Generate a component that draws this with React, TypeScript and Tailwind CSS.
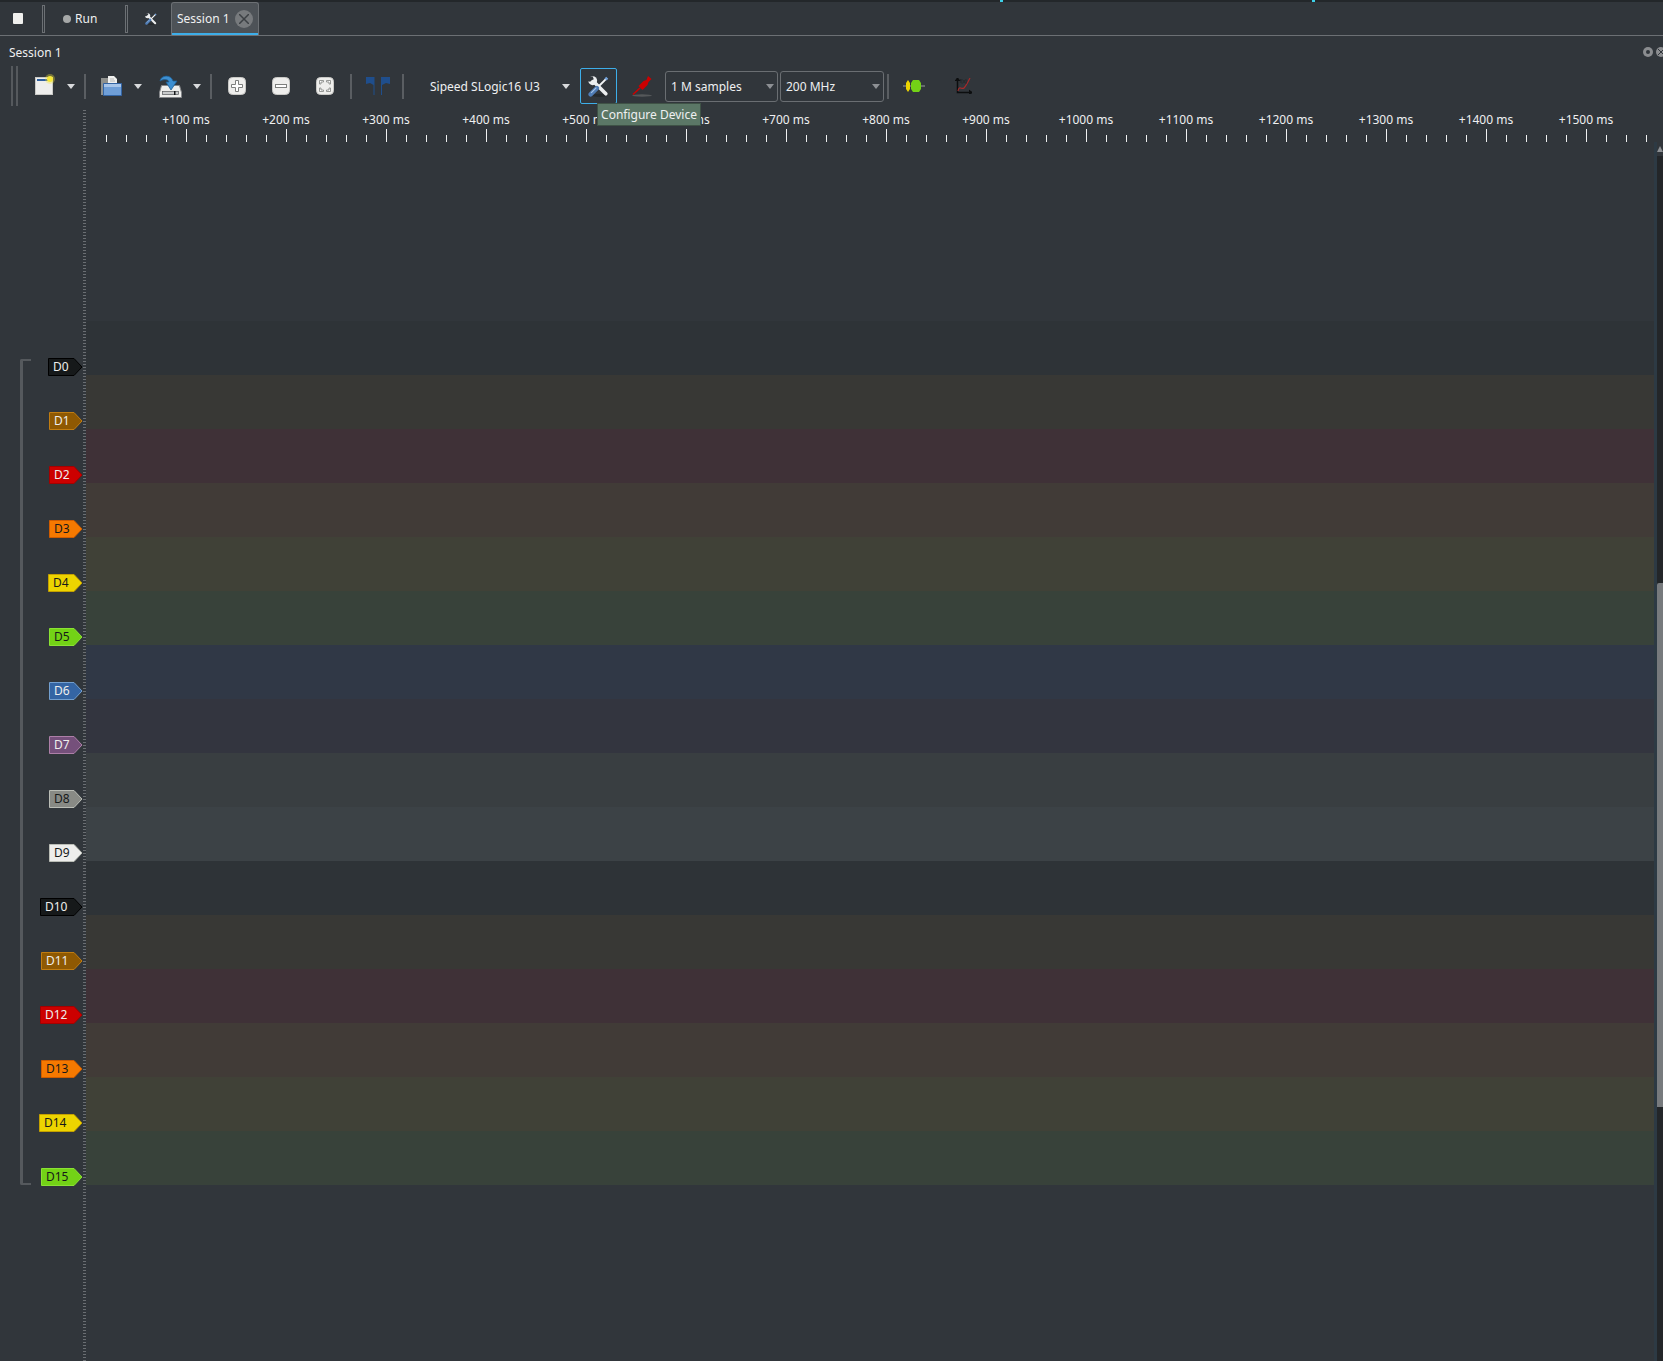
import React from "react";

const channels = [
  { n: "D0", w: 35, fill: "#16191a", line: "#000000", text: "#eeeeec", band: "bg-[#2e3337]" },
  { n: "D1", w: 34, fill: "#8f5902", line: "#c17d11", text: "#eeeeec", band: "bg-[#383835]" },
  { n: "D2", w: 34, fill: "#cc0000", line: "#a40000", text: "#eeeeec", band: "bg-[#3f3137]" },
  { n: "D3", w: 34, fill: "#f57900", line: "#ce5c00", text: "#16191a", band: "bg-[#413b37]" },
  { n: "D4", w: 35, fill: "#edd400", line: "#c4a000", text: "#16191a", band: "bg-[#404137]" },
  { n: "D5", w: 34, fill: "#73d216", line: "#8ae234", text: "#16191a", band: "bg-[#38423a]" },
  { n: "D6", w: 34, fill: "#3465a4", line: "#729fcf", text: "#eeeeec", band: "bg-[#303846]" },
  { n: "D7", w: 34, fill: "#75507b", line: "#ad7fa8", text: "#eeeeec", band: "bg-[#33353f]" },
  { n: "D8", w: 34, fill: "#888a85", line: "#babdb6", text: "#16191a", band: "bg-[#393e41]" },
  { n: "D9", w: 34, fill: "#eeeeec", line: "#babdb6", text: "#16191a", band: "bg-[#3c4246]" },
  { n: "D10", w: 43, fill: "#16191a", line: "#000000", text: "#eeeeec", band: "bg-[#2e3337]" },
  { n: "D11", w: 42, fill: "#8f5902", line: "#c17d11", text: "#eeeeec", band: "bg-[#383835]" },
  { n: "D12", w: 43, fill: "#cc0000", line: "#a40000", text: "#eeeeec", band: "bg-[#3f3137]" },
  { n: "D13", w: 42, fill: "#f57900", line: "#ce5c00", text: "#16191a", band: "bg-[#413b37]" },
  { n: "D14", w: 44, fill: "#edd400", line: "#c4a000", text: "#16191a", band: "bg-[#404137]" },
  { n: "D15", w: 42, fill: "#73d216", line: "#8ae234", text: "#16191a", band: "bg-[#38423a]" },
];

const labels = Array.from({ length: 15 }, (_, i) => `+${(i + 1) * 100} ms`);

function Sep() {
  return <div className="w-[2px] h-[25px] bg-[#5a5e62] shrink-0" />;
}

function Caret() {
  return (
    <svg width="8" height="5" viewBox="0 0 8 5" className="shrink-0">
      <path d="M0 0h8L4 5z" fill="#d8dadc" />
    </svg>
  );
}

function TabSep() {
  return <div className="w-[3px] h-[28px] border border-[#6c7074] bg-[#31363b] shrink-0" />;
}

function Tools({ size }: { size: number }) {
  return (
    <svg width={size} height={size} viewBox="0 0 20 20" className="shrink-0">
      <ellipse cx="11" cy="18.500" rx="7" ry="1.500" fill="#25292c" />
      <path d="M5 5l12 12" stroke="#eceeef" strokeWidth="3.400" strokeLinecap="round" />
      <circle cx="4.500" cy="4.500" r="4.200" fill="#eceeef" />
      <path d="M0 0.500h4.500l1 2.500-2 1-1.500 1.500L0 5z" fill="#31363b" />
      <path d="M10 10l8-8" stroke="#f2f4f5" strokeWidth="1.800" />
      <path d="M16.500 1.500l2 2" stroke="#6f9fd8" strokeWidth="2.200" />
      <path d="M2.500 17.500l6-6" stroke="#4f7cb5" strokeWidth="4.200" strokeLinecap="round" />
      <path d="M3 16l5-5" stroke="#a9c6e8" strokeWidth="1" />
    </svg>
  );
}

function ZoomBtn({ kind }: { kind: "in" | "out" | "fit" }) {
  return (
    <svg width="18" height="18" viewBox="0 0 18 18" className="shrink-0">
      <rect x="0.500" y="0.500" width="17" height="17" rx="4" fill="#eeeeec" stroke="#c9c9c6" />
      {kind === "in" && <path d="M7.500 3.500h3v4h4v3h-4v4h-3v-4h-4v-3h4z" fill="#fff" stroke="#7d7f7d" />}
      {kind === "out" && <rect x="3.500" y="7.500" width="11" height="3" fill="#fff" stroke="#7d7f7d" />}
      {kind === "fit" && (
        <path
          d="M3.500 7V3.500H7.500V5H5V7zM14.500 7V3.500H10.500V5H13V7zM14.500 11V14.500H10.500V13H13V11zM3.500 11V14.500H7.500V13H5V11z"
          fill="#fff"
          stroke="#8b8d8b"
          strokeWidth="0.900"
        />
      )}
    </svg>
  );
}

function Combo({ text, w }: { text: string; w: string }) {
  return (
    <div className={`${w} h-[31px] rounded-[3px] border border-[#6a6e72] flex items-center justify-between pl-[5px] pr-[3px] text-[#eff0f1]`}>
      <span className="mt-[1px]">{text}</span>
      <svg width="8" height="5" viewBox="0 0 8 5"><path d="M0 0h8L4 5z" fill="#8d9094" /></svg>
    </div>
  );
}

function Label({ ch }: { ch: (typeof channels)[number] }) {
  const w = ch.w;
  return (
    <div className="relative h-[20px] flex items-center" style={{ width: w }}>
      <svg width={w} height="20" viewBox={`0 0 ${w} 20`} className="absolute inset-0">
        <path d={`M0.500 1.500H${w - 9}L${w - 1} 10L${w - 9} 18.500H0.500z`} fill={ch.fill} stroke={ch.line} />
      </svg>
      <span className="relative pl-[5px] text-[12px] leading-none" style={{ color: ch.text }}>{ch.n}</span>
    </div>
  );
}

const dots =
  "bg-[repeating-linear-gradient(to_bottom,#6a6e72_0,#6a6e72_1px,transparent_1px,transparent_3px)] bg-[length:3px_100%] bg-no-repeat bg-[position:83px_0]";

export default function App() {
  return (
    <div className="w-[1663px] h-[1361px] overflow-hidden flex flex-col bg-[#31363b] text-[#eff0f1] font-['Noto_Sans','Open_Sans',sans-serif] text-[12px]">
      {/* Top strip */}
      <div className="h-[2px] bg-[#23272a] shrink-0 relative">
        <div className="absolute left-[1000px] top-0 w-[3px] h-[2px] bg-[#3dd0e9]" />
        <div className="absolute left-[1312px] top-0 w-[3px] h-[2px] bg-[#3dd0e9]" />
      </div>

      {/* Tab bar */}
      <div className="h-[34px] shrink-0 flex items-center border-b border-[#6c7074] pl-[13px]">
        <div className="w-[10px] h-[11px] bg-[#f0f0ee] rounded-[1px]" />
        <div className="ml-[19px]"><TabSep /></div>
        <div className="ml-[18px] w-[8px] h-[8px] rounded-full bg-[#a6a8a8]" />
        <span className="ml-[4px] w-[21px]">Run</span>
        <div className="ml-[29px]"><TabSep /></div>
        <div className="ml-[17px]"><Tools size={12} /></div>
        <div className="ml-[14px] self-end h-[33px] w-[88px] rounded-t-[3px] border border-b-0 border-[#6c7074] bg-[#4d5257] relative flex items-center pl-[5px]">
          <span>Session 1</span>
          <div className="absolute right-[5px] top-[7px] w-[18px] h-[18px] rounded-full bg-[#777a7d] flex items-center justify-center">
            <svg width="10" height="10" viewBox="0 0 10 10"><path d="M0 0l10 10M10 0L0 10" stroke="#3c4044" strokeWidth="1.500" /></svg>
          </div>
          <div className="absolute left-0 right-0 bottom-0 h-[2px] bg-[#3daee9]" />
        </div>
      </div>

      {/* Dock title */}
      <div className="h-[32px] shrink-0 flex items-center justify-between pl-[9px]">
        <span className="mt-[2px]">Session 1</span>
        <div className="flex items-center gap-[3px] -mr-[3px]">
          <div className="w-[10px] h-[10px] rounded-full bg-[#8b8d90] flex items-center justify-center">
            <div className="w-[4px] h-[4px] rounded-full bg-[#31363b]" />
          </div>
          <div className="w-[10px] h-[10px] rounded-full bg-[#8b8d90] flex items-center justify-center">
            <svg width="6" height="6" viewBox="0 0 6 6"><path d="M0 0l6 6M6 0L0 6" stroke="#31363b" /></svg>
          </div>
        </div>
      </div>

      {/* Toolbar */}
      <div className="h-[36px] shrink-0 flex items-center relative z-10">
        <div className="ml-[11px] flex gap-[3px] shrink-0">
          <div className="w-[2px] h-[40px] bg-[#55595d]" />
          <div className="w-[2px] h-[40px] bg-[#55595d]" />
        </div>
        <svg width="18" height="18" viewBox="0 0 18 18" className="ml-[17px] shrink-0 overflow-visible">
          <rect x="0.500" y="0.500" width="17" height="17" fill="#eeeeec" stroke="#c9c9c6" />
          <rect x="2" y="2" width="12" height="2" fill="#2d5f9e" />
          <circle cx="15" cy="2" r="5" fill="#f6e73a" opacity="0.350" />
          <circle cx="15" cy="2" r="3" fill="#f6e73a" />
        </svg>
        <div className="ml-[14px]"><Caret /></div>
        <div className="ml-[9px]"><Sep /></div>
        <svg width="21" height="20" viewBox="0 0 21 20" className="ml-[15px] shrink-0">
          <path d="M0 2h7l1 2v15H0z" fill="#8f918e" />
          <path d="M7 0h6l3 3v8H7z" fill="#f0f0ee" />
          <path d="M9 3h4M9 5h5" stroke="#a9abaa" strokeWidth="0.800" />
          <path d="M2.500 7.500h18v12h-18z" fill="#6f9fd8" stroke="#3465a4" />
          <path d="M3 8h17v3H3z" fill="#a8c6ea" />
        </svg>
        <div className="ml-[12px]"><Caret /></div>
        <svg width="23" height="23" viewBox="0 0 23 23" className="ml-[17px] shrink-0">
          <path d="M2.500 10.500h18l2 7v5H.500v-5z" fill="#eeeeec" stroke="#85878a" />
          <rect x="3.500" y="16.500" width="16" height="3" fill="#c9cbcc" stroke="#55585a" strokeWidth="0.700" />
          <rect x="15" y="16" width="1.500" height="4" fill="#16191a" />
          <path d="M1 6C2 0 12-1 14 6h4l-6 9-5-8h3C9 4 5 4 1 6z" fill="#3d8fd1" stroke="#1e5f96" strokeWidth="0.800" />
        </svg>
        <div className="ml-[11px]"><Caret /></div>
        <div className="ml-[9px]"><Sep /></div>
        <div className="ml-[16px]"><ZoomBtn kind="in" /></div>
        <div className="ml-[26px]"><ZoomBtn kind="out" /></div>
        <div className="ml-[26px]"><ZoomBtn kind="fit" /></div>
        <div className="ml-[16px]"><Sep /></div>
        <svg width="24" height="18" viewBox="0 0 24 18" className="ml-[14px] shrink-0">
          <path d="M0 0h8.500v18h-1V8L4 6 0 7z" fill="#1f4e8c" />
          <path d="M15 0h9v7l-4-1-4 2v10h-1z" fill="#1f4e8c" />
        </svg>
        <div className="ml-[12px]"><Sep /></div>
        <span className="ml-[26px] w-[132px] shrink-0 mt-[1px]">Sipeed SLogic16 U3</span>
        <Caret />
        <div className="ml-[10px] w-[37px] h-[36px] rounded-[2px] border border-[#3daee9] flex items-center justify-center relative shrink-0">
          <Tools size={21} />
          <div className="absolute left-[16px] top-[34px] h-[23px] w-[104px] bg-[#5b7766] border border-[#3f5246] flex items-center justify-center whitespace-nowrap">Configure Device</div>
        </div>
        <svg width="20" height="21" viewBox="0 0 20 21" className="ml-[15px] shrink-0">
          <ellipse cx="10" cy="19.500" rx="10" ry="1.200" fill="#55585a" />
          <path d="M16 0l3.500 3-3 3-1 3-5 5-4-4 5-5 3-1z" fill="#cc0000" />
          <path d="M8 12l-7 6.500" stroke="#cc0000" strokeWidth="1.600" />
        </svg>
        <div className="ml-[13px]"><Combo text="1 M samples" w="w-[113px]" /></div>
        <div className="ml-[2px]"><Combo text="200 MHz" w="w-[104px]" /></div>
        <div className="ml-[3px]"><Sep /></div>
        <svg width="22" height="12" viewBox="0 0 22 12" className="ml-[14px] shrink-0">
          <path d="M0 6h22" stroke="#9a9c9e" />
          <path d="M3 3l2-3 2 3v6l-2 3-2-3z" fill="#edd400" />
          <path d="M8 3l2-3h6l2 3v6l-2 3h-6l-2-3z" fill="#73d216" />
        </svg>
        <svg width="17" height="16" viewBox="0 0 17 16" className="ml-[30px] shrink-0">
          <path d="M2.500 0v14.500H17" stroke="#0c0e0f" strokeWidth="1.500" fill="none" />
          <path d="M0 3l2.500-3L5 3M14 12l3 2.500-3 2.500" stroke="#0c0e0f" fill="#0c0e0f" />
          <path d="M3 13c1-6 4-1 6-3s4-6 6-10" stroke="#a62a2a" strokeWidth="1.200" fill="none" />
          <text x="4.500" y="5" fontSize="5" fill="#16191a">f(x)</text>
        </svg>
      </div>

      {/* Ruler */}
      <div className="h-[38px] shrink-0 flex">
        <div className="w-[86px] shrink-0 pt-[6px]">
          <div className={`h-full ${dots}`} />
        </div>
        <div className="flex-1 flex flex-col min-w-0 overflow-hidden">
          <div className="h-[25px] flex pl-[50px] pt-[7px]">
            {labels.map((l) => (
              <div key={l} className="w-[100px] shrink-0 text-center leading-[18px]">{l}</div>
            ))}
          </div>
          <svg width="1577" height="13" viewBox="0 0 1577 13" className="block">
            {Array.from({ length: 78 }, (_, i) => {
              const x = 20 + i * 20 + 0.5;
              const major = i % 5 === 4;
              return <line key={i} x1={x} x2={x} y1={major ? 0 : 6} y2={13} stroke="#eff0f1" strokeWidth="1" />;
            })}
          </svg>
        </div>
      </div>

      {/* Main */}
      <div className="flex-1 flex min-h-0">
        <div className={`w-[86px] shrink-0 relative pt-[198px] ${dots}`}>
          <div className="absolute left-[20px] top-[217px] h-[826px] w-[11px] rounded-l-[2px] border-l-[3px] border-t-[2px] border-b-[2px] border-[#55595d]" />
          <div className="flex flex-col">
            {channels.map((c) => (
              <div key={c.n} className="h-[54px] flex items-center justify-end pr-[3px]">
                <Label ch={c} />
              </div>
            ))}
          </div>
        </div>
        <div className="flex-1 pt-[179px] min-w-0">
          {channels.map((c) => (
            <div key={c.n} className={`h-[54px] ${c.band}`} />
          ))}
        </div>
        {/* Scrollbar */}
        <div className="w-[3px] shrink-0 bg-[#2d3a44]" />
        <div className="w-[6px] shrink-0 flex flex-col pt-[4px]">
          <svg width="6" height="6" viewBox="0 0 6 6" className="shrink-0"><path d="M3 0l3 6H0z" fill="#8d9094" /></svg>
          <div className="mt-[4px] flex-1 bg-[#232629] flex flex-col pt-[427px]">
            <div className="h-[524px] shrink-0 bg-[#777a7d] rounded-tl-[2px]" />
          </div>
        </div>
      </div>
    </div>
  );
}
